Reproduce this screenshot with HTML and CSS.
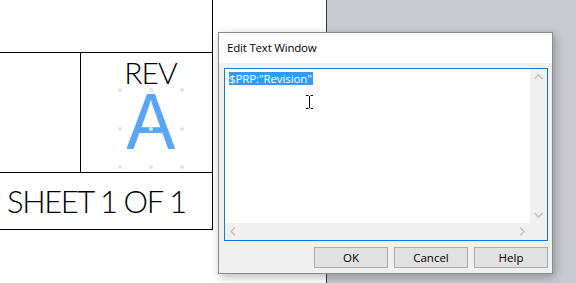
FILE: index.html
```html
<!DOCTYPE html>
<html>
<head>
<meta charset="utf-8">
<link rel="stylesheet" href="styles.css">
</head>
<body>
<div class="desk">
  <div class="paper">
    <div class="tblock">
      <div class="tb-top"></div>
      <div class="tb-mid">
        <div class="tb-blank"></div>
        <div class="tb-rev">
          <div class="rev-label">REV</div>
          <div class="rev-value">A</div>
          <span class="handle h1"></span><span class="handle h2"></span><span class="handle h3"></span>
          <span class="handle h4"></span><span class="handle h5"></span><span class="handle h6"></span>
          <span class="handle h7"></span><span class="handle h8"></span><span class="handle h9"></span>
        </div>
      </div>
      <div class="tb-sheet">SHEET 1 OF 1</div>
    </div>
  </div>
</div>

<div class="dialog">
  <div class="dlg-title">Edit Text Window</div>
  <div class="dlg-client">
    <div class="editbox">
      <div class="edit-area">
        <span class="sel">$PRP:"Revision"</span>
        <svg class="ibeam" width="9" height="16" viewBox="0 0 9 16">
          <path d="M1 1.5h2.5M5.5 1.5H8M4.5 2v12M1 14.5h2.5M5.5 14.5H8" stroke="#fff" stroke-width="3" fill="none"/>
          <path d="M1 1.5h2.5M5.5 1.5H8M4.5 2v12M1 14.5h2.5M5.5 14.5H8" stroke="#000" stroke-width="1" fill="none"/>
        </svg>
      </div>
      <div class="vscroll">
        <svg width="17" height="17" viewBox="0 0 17 17"><path d="M4.5 10l4-4 4 4" stroke="#c2c2c2" stroke-width="1.6" fill="none"/></svg>
        <svg width="17" height="17" viewBox="0 0 17 17"><path d="M4.5 7l4 4 4-4" stroke="#c2c2c2" stroke-width="1.6" fill="none"/></svg>
      </div>
      <div class="hscroll">
        <svg width="17" height="17" viewBox="0 0 17 17"><path d="M10 4.5l-4 4 4 4" stroke="#c2c2c2" stroke-width="1.6" fill="none"/></svg>
        <svg width="17" height="17" viewBox="0 0 17 17"><path d="M7 4.5l4 4-4 4" stroke="#c2c2c2" stroke-width="1.6" fill="none"/></svg>
      </div>
      <div class="corner"></div>
    </div>
    <div class="buttons">
      <button class="btn">OK</button>
      <button class="btn">Cancel</button>
      <button class="btn">Help</button>
    </div>
  </div>
</div>
</body>
</html>
```
FILE: styles.css
```css
* { box-sizing: border-box; }
html, body { margin: 0; padding: 0; }
body {
  width: 576px;
  height: 283px;
  overflow: hidden;
  background: #c9cad1;
  position: relative;
}
.desk { display: flex; height: 283px; }
.paper {
  width: 327px;
  height: 283px;
  background: #fff;
  border-right: 1px solid #3a3a3a;
}
.tblock {
  width: 213px;
  border-right: 1px solid #000;
  border-bottom: 1px solid #000;
  display: flex;
  flex-direction: column;
  font-family: "Lato", "Liberation Sans", sans-serif;
  font-weight: 300;
  color: #000;
}
.tb-top { height: 53px; border-bottom: 1px solid #000; }
.tb-mid { height: 120px; border-bottom: 1px solid #000; display: flex; }
.tb-blank { width: 81px; border-right: 1px solid #000; }
.tb-rev {
  flex: 1;
  position: relative;
  display: flex;
  flex-direction: column;
  align-items: center;
  padding-left: 8px;
}
.rev-label {
  font-size: 30px;
  line-height: 30px;
  margin-top: 4px;
  letter-spacing: -1px;
}
.rev-value {
  font-family: "Liberation Sans", sans-serif;
  font-weight: 400;
  font-size: 80px;
  line-height: 58px;
  height: 58px;
  color: #58a6f5;
  margin-top: 6px;
  transform: scaleX(0.92);
}
.handle {
  position: absolute;
  width: 4px;
  height: 4px;
  border-radius: 50%;
  background: #e2e2e2;
}
.h1 { left: 37px; top: 35px; }
.h2 { left: 68px; top: 35px; }
.h3 { left: 99px; top: 35px; }
.h4 { left: 37px; top: 74px; }
.h5 { left: 68px; top: 74px; background: #d8e8f8; }
.h6 { left: 99px; top: 74px; }
.h7 { left: 37px; top: 112px; }
.h8 { left: 68px; top: 112px; }
.h9 { left: 99px; top: 112px; }
.tb-sheet {
  height: 56px;
  font-size: 31px;
  line-height: 56px;
  padding-left: 7px;
  letter-spacing: -1.4px;
  white-space: nowrap;
}

.dialog {
  position: absolute;
  left: 218px;
  top: 32px;
  width: 335px;
  height: 242px;
  border: 1px solid #8a8a8a;
  background: #f0f0f0;
  box-shadow: 2px 3px 9px rgba(0, 0, 0, 0.28);
  display: flex;
  flex-direction: column;
  font-family: "Open Sans", "Noto Sans", sans-serif;
  font-size: 11px;
  color: #000;
}
.dlg-title {
  height: 30px;
  background: #fff;
  padding-left: 8px;
  line-height: 29px;
  font-size: 11.5px;
  letter-spacing: -0.2px;
}
.dlg-client {
  flex: 1;
  padding: 5px 4px 0 5px;
  display: flex;
  flex-direction: column;
}
.editbox {
  height: 173px;
  border: 1px solid #1e78c8;
  background: #fff;
  display: grid;
  grid-template-columns: 1fr 17px;
  grid-template-rows: 1fr 17px;
}
.edit-area { position: relative; padding: 2px 0 0 4px; }
.sel {
  display: inline-block;
  background: #3399ff;
  color: #fff;
  font-size: 11.5px;
  line-height: 13px;
  padding: 0 1px 0 0;
  letter-spacing: -0.1px;
}
.ibeam { position: absolute; left: 80px; top: 25px; }
.vscroll {
  background: #f0f0f0;
  display: flex;
  flex-direction: column;
  justify-content: space-between;
}
.hscroll {
  background: #f0f0f0;
  display: flex;
  justify-content: space-between;
}
.corner { background: #f0f0f0; }
.buttons {
  display: flex;
  justify-content: flex-end;
  gap: 6px;
  margin-top: 6px;
  padding-right: 0;
}
.btn {
  width: 74px;
  height: 21px;
  border: 1px solid #adadad;
  background: #e1e1e1;
  font-family: "Open Sans", "Noto Sans", sans-serif;
  font-size: 11.5px;
  color: #000;
  padding: 0;
  margin: 0;
  line-height: 19px;
}
```
